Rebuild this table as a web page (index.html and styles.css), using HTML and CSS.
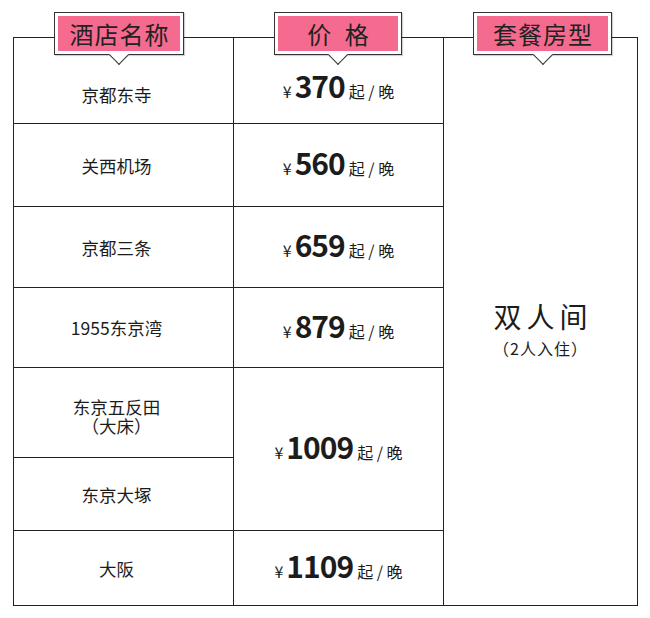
FILE: index.html
```html
<!DOCTYPE html>
<html lang="zh-CN">
<head>
<meta charset="utf-8">
<title>酒店价格</title>
<link rel="stylesheet" href="styles.css">
</head>
<body>
<div class="sheet">
  <div class="heads">
    <div class="tab tab--name"><span class="tab-label">酒店名称</span><i class="tab-notch"></i></div>
    <div class="tab tab--price"><span class="tab-label tab-label--spaced">价 格</span><i class="tab-notch"></i></div>
    <div class="tab tab--room"><span class="tab-label">套餐房型</span><i class="tab-notch"></i></div>
  </div>
  <div class="table">
    <div class="cell cell--name cell--first-name">京都东寺</div>
    <div class="cell cell--price cell--first-price"><div class="price"><span class="yen">¥</span><span class="amount">370</span><span class="unit">起 / 晚</span></div></div>
    <div class="cell cell--room">
      <div class="room">
        <div class="room-title">双人间</div>
        <div class="room-note">（2人入住）</div>
      </div>
    </div>

    <div class="cell cell--name">关西机场</div>
    <div class="cell cell--price"><div class="price"><span class="yen">¥</span><span class="amount">560</span><span class="unit">起 / 晚</span></div></div>

    <div class="cell cell--name">京都三条</div>
    <div class="cell cell--price"><div class="price"><span class="yen">¥</span><span class="amount">659</span><span class="unit">起 / 晚</span></div></div>

    <div class="cell cell--name">1955东京湾</div>
    <div class="cell cell--price"><div class="price"><span class="yen">¥</span><span class="amount">879</span><span class="unit">起 / 晚</span></div></div>

    <div class="cell cell--name cell--multi">
      <div class="name-lines">
        <div class="name-line">东京五反田</div>
        <div class="name-line">（大床）</div>
      </div>
    </div>
    <div class="cell cell--price cell--tall"><div class="price"><span class="yen">¥</span><span class="amount">1009</span><span class="unit">起 / 晚</span></div></div>

    <div class="cell cell--name">东京大塚</div>

    <div class="cell cell--name">大阪</div>
    <div class="cell cell--price"><div class="price"><span class="yen">¥</span><span class="amount">1109</span><span class="unit">起 / 晚</span></div></div>
  </div>
</div>
</body>
</html>
```

FILE: styles.css
```css
html, body {
  margin: 0;
  padding: 0;
  background: #fff;
}

body {
  font-family: "Noto Sans CJK SC", "Noto Sans", sans-serif;
  color: #1c1c1c;
}

.sheet {
  width: 650px;
  padding-top: 12px;
}

/* ---------- header tabs ---------- */
.heads {
  display: grid;
  grid-template-columns: 220px 210px 194px;
  margin-left: 14px;
  height: 43px;
}

.tab {
  position: relative;
  z-index: 2;
  box-sizing: border-box;
  height: 43px;
  padding: 3px;
  background: #fff;
  border: 1px solid #333;
  box-shadow: 1px 1px 1px rgba(0, 0, 0, 0.18);
  justify-self: center;
}

.tab--name { width: 130px; margin-right: 10px; }
.tab--price { width: 128px; margin-right: 2px; }
.tab--room { width: 139px; margin-left: 3px; }

.tab-label {
  position: relative;
  z-index: 1;
  display: block;
  height: 35px;
  line-height: 35px;
  background: #f56b8f;
  color: #222;
  font-size: 24px;
  letter-spacing: 1px;
  padding-left: 1px;
  text-align: center;
  white-space: pre;
}

.tab-label--spaced {
  letter-spacing: 4px;
  padding-left: 4px;
}

.tab-notch {
  position: absolute;
  z-index: 0;
  left: 50%;
  bottom: -7.5px;
  width: 13px;
  height: 13px;
  margin-left: -7px;
  background: #fff;
  border-right: 1px solid #333;
  border-bottom: 1px solid #333;
  transform: rotate(45deg);
}

/* ---------- table ---------- */
.table {
  display: grid;
  grid-template-columns: 220px 210px 194px;
  grid-template-rows: 86px 83px 81px 80px 90px 73px 75px;
  width: max-content;
  margin-left: 13px;
  margin-top: -18px;
  border-top: 1px solid #222;
  border-left: 1px solid #222;
}

.cell {
  box-sizing: border-box;
  display: flex;
  align-items: center;
  justify-content: center;
  text-align: center;
  border-right: 1px solid #222;
  border-bottom: 1px solid #222;
}

.cell--name {
  font-size: 17.5px;
  line-height: 19px;
  padding-right: 14px;
}

.cell--multi {
  padding-top: 6px;
}

.name-line {
  height: 19px;
  line-height: 19px;
  overflow: visible;
}

.cell--first-name {
  padding-top: 28px;
}

.cell--first-price {
  padding-top: 14px;
}

.cell--tall {
  grid-row: span 2;
}

.cell--room {
  grid-column: 3;
  grid-row: span 7;
  padding-top: 14px;
}

.price {
  white-space: nowrap;
  line-height: 32px;
}

.yen {
  font-size: 16px;
  margin-right: 3px;
}

.amount {
  font-size: 30px;
  font-weight: 700;
  letter-spacing: -1px;
  margin-right: 4px;
}

.unit {
  font-size: 16px;
}

.room-title {
  font-size: 28px;
  line-height: 34px;
  letter-spacing: 5px;
  padding-left: 5px;
}

.room-note {
  font-size: 16px;
  line-height: 20px;
  margin-top: 5px;
  letter-spacing: 1px;
}
```
